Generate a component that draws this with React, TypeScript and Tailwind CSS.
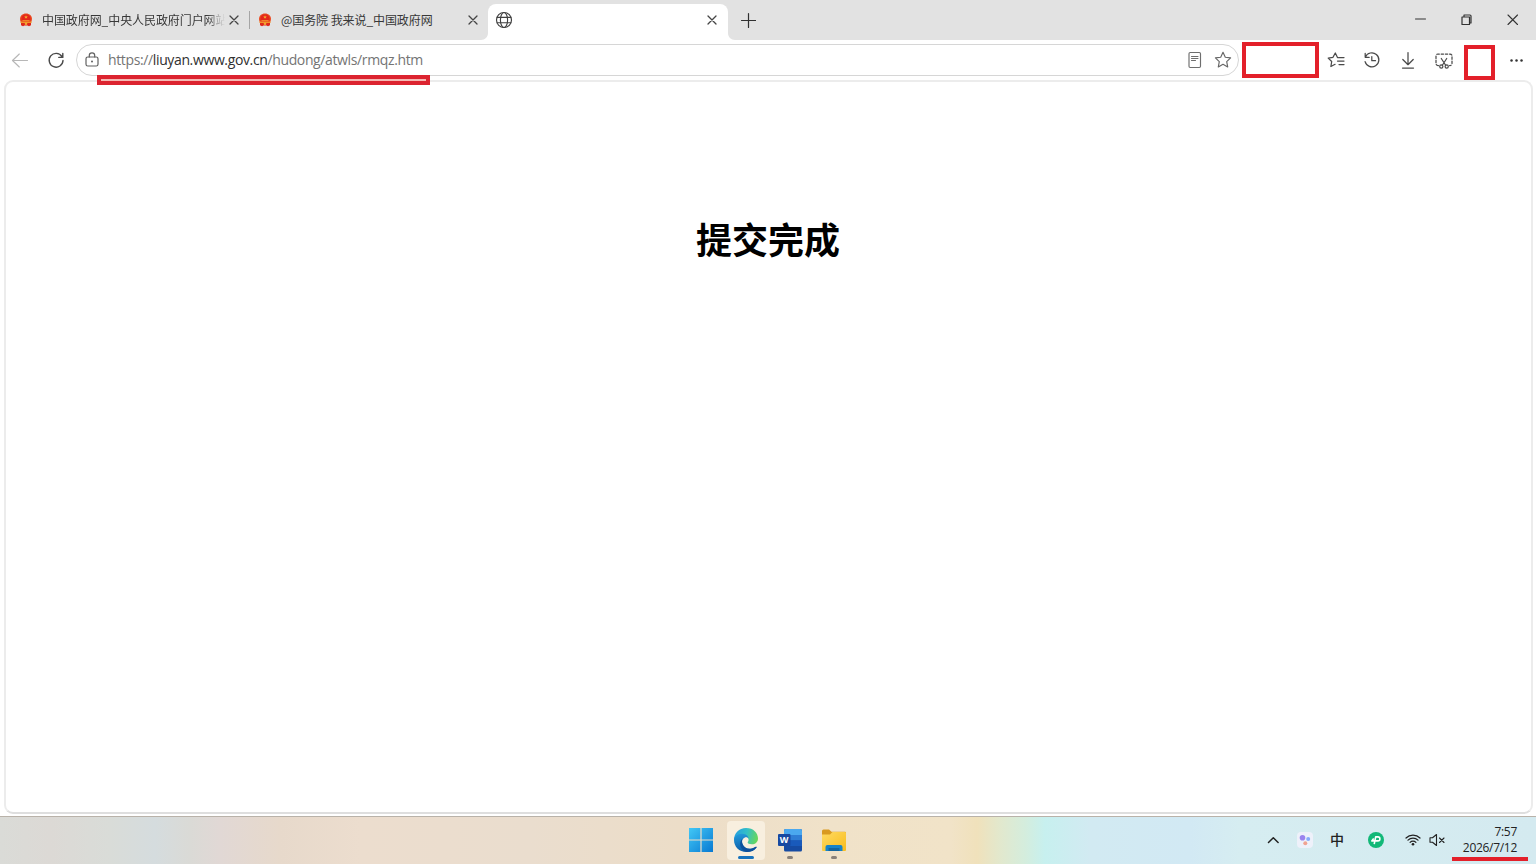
import React from "react";

const stroke = { fill: "none", stroke: "currentColor", strokeLinecap: "round", strokeLinejoin: "round" } as const;

function Emblem() {
  return (
    <svg className="size-4 shrink-0" viewBox="0 0 16 16">
      <path d="M8 1.500C4.400 1.500 2 3.800 2 7.100c0 1.300.4 2.300 1 3.100h10c.6-.8 1-1.800 1-3.100 0-3.300-2.400-5.600-6-5.600z" fill="#ea4a20" />
      <path d="M8 2.600c-2.800 0-4.600 1.800-4.600 4.300 0 .9.200 1.600.6 2.300h8c.4-.7.600-1.400.6-2.300 0-2.500-1.800-4.300-4.600-4.300z" fill="#e3261b" />
      <path d="M8 3.200l.6 1.200 1.200.1-.9.900.3 1.200L8 6l-1.200.6.3-1.200-.9-.9 1.200-.1zM4.400 8.200h7.200v1H4.400z" fill="#f3a42f" />
      <path d="M2.200 9.500c2 .3 9.600.3 11.600 0l-.4 1.600H2.600z" fill="#f0932b" />
      <path d="M3 11h10v2.300l-2 1-1.500-.9h-3l-1.500.9-2-1z" fill="#df271b" />
      <circle cx="8" cy="11.700" r="1.300" fill="#f3a42f" />
    </svg>
  );
}

function Close() {
  return (
    <svg className="size-4 shrink-0 text-[#454545]" viewBox="0 0 16 16">
      <path d="M4 4l8 8M12 4l-8 8" {...stroke} strokeWidth="1.300" />
    </svg>
  );
}

function Globe() {
  return (
    <svg className="size-[18px] text-[#404040]" viewBox="0 0 18 18">
      <g {...stroke} strokeWidth="1.150">
        <circle cx="9" cy="9" r="7.500" />
        <ellipse cx="9" cy="9" rx="3.600" ry="7.500" />
        <path d="M2.200 6.300h13.600M2.200 11.700h13.600" />
      </g>
    </svg>
  );
}

const starPath = "M10 2.300l2.300 4.900 5.300.7-3.900 3.700 1 5.300-4.700-2.600-4.700 2.600 1-5.300-3.900-3.700 5.300-.7z";

function TabStrip() {
  return (
    <header className="flex h-10 bg-[#e2e2e2] text-xs text-[#383838]">
      <div className="flex h-10 w-[249px] items-center pl-[18px] pr-[7px]">
        <Emblem />
        <div className="ml-2 w-[183px] overflow-hidden whitespace-nowrap tracking-[-0.08px] [mask-image:linear-gradient(to_right,black_90%,transparent_100%)]">中国政府网_中央人民政府门户网站</div>
        <div className="ml-[1px]"><Close /></div>
      </div>
      <div className="mt-[11px] h-[18px] w-px bg-[#a5a5a5]" />
      <div className="flex h-10 w-[238px] items-center pl-[7px] pr-[15px]">
        <Emblem />
        <div className="ml-2 flex-1 whitespace-nowrap tracking-[-0.08px]">@国务院 我来说_中国政府网</div>
        <div className="-mr-[8px]"><Close /></div>
      </div>
      <div className="flex h-10 w-[240px]">
        <svg className="-ml-[7px] mt-auto h-[7px] w-[7px] shrink-0" viewBox="0 0 7 7"><path d="M7 0v7H0C4 7 7 4 7 0z" fill="#fff" /></svg>
        <div className="mt-1 flex h-9 w-[240px] shrink-0 items-center justify-between rounded-t-[8px] bg-white pb-1 pl-[7px] pr-[8px]">
          <Globe />
          <Close />
        </div>
        <svg className="mt-auto h-[7px] w-[7px] shrink-0" viewBox="0 0 7 7"><path d="M0 0v7h7C3 7 0 4 0 0z" fill="#fff" /></svg>
      </div>
      <svg className="ml-[12px] mt-[12px] size-4 text-[#303030]" viewBox="0 0 16 16"><path d="M8.500 1.500v14M1.500 8.500h14" {...stroke} strokeWidth="1.200" /></svg>
      <div className="ml-auto flex h-10 items-center text-[#333]">
        <svg className="h-10 w-[46px]" viewBox="0 0 46 40"><path d="M18.500 19h10" {...stroke} /></svg>
        <svg className="h-10 w-[46px]" viewBox="0 0 46 40"><path d="M19 17h7.500v7.500H19zM21 17v-2h6q1 0 1 1v7h-1.500" {...stroke} strokeWidth="1.200" /></svg>
        <svg className="h-10 w-[47px]" viewBox="0 0 47 40"><path d="M19 15l9.500 9.500M28.500 15L19 24.500" {...stroke} strokeWidth="1.100" /></svg>
      </div>
    </header>
  );
}

function Toolbar() {
  return (
    <div className="flex h-10 items-center bg-white text-[#4a4a4a]">
      <svg className="ml-[10px] size-5 shrink-0 text-[#b7b7b7]" viewBox="0 0 20 20"><path d="M17.500 10.500h-15M9.300 4l-6.800 6.500L9.300 17" {...stroke} strokeWidth="1.150" /></svg>
      <svg className="ml-4 size-5 shrink-0" viewBox="0 0 20 20"><path d="M15.900 6.500A6.900 6.900 0 1 0 17 10.500M16.800 3.400v4h-4" {...stroke} strokeWidth="1.400" /></svg>
      <div className="ml-[10px] flex h-8 w-[1163px] shrink-0 items-center rounded-full border border-[#d6d6d6] bg-white pl-[5px] pr-[5px]">
        <svg className="size-5 shrink-0 text-[#606060]" viewBox="0 0 20 20">
          <rect x="4" y="7" width="12" height="9" rx="1.800" {...stroke} strokeWidth="1.200" />
          <path d="M7.300 7V5.500a2.700 2.700 0 0 1 5.400 0V7" {...stroke} strokeWidth="1.200" /><circle cx="10" cy="11.500" r="1" fill="currentColor" />
        </svg>
        <div className="ml-[6px] flex-1 whitespace-nowrap font-['Open_Sans','Noto_Sans_CJK_SC',sans-serif] text-[14px] leading-5 tracking-[-0.37px] text-[#747474]">https://<span className="text-[#303030]">liuyan.www.gov.cn</span>/hudong/atwls/rmqz.htm</div>
        <svg className="size-5 shrink-0 text-[#6e6e6e]" viewBox="0 0 20 20"><rect x="4" y="2.500" width="11.500" height="15" rx="1.200" {...stroke} strokeWidth="1.150" /><path d="M6.500 6.500h6.500M6.500 8.500h6.500M6.500 10.500h4" {...stroke} strokeWidth="1.100" /></svg>
        <svg className="ml-2 size-5 shrink-0 text-[#666]" viewBox="0 0 20 20"><path d={starPath} {...stroke} strokeWidth="1.150" /></svg>
      </div>
      <svg className="ml-[87px] size-5 shrink-0" viewBox="0 0 20 20"><path d="M12.300 7.500H11.500L9.300 3 7 7.300l-4.800.8 3.500 3.400-.8 5 4.200-2.200M13 7.500h5M11.500 11H18M13 14.500h5" {...stroke} strokeWidth="1.250" /></svg>
      <svg className="ml-4 size-5 shrink-0" viewBox="0 0 20 20"><path d="M3.400 7.100a7 7 0 1 1-.3 4.500M3.200 3.300v4h4M9.800 6.500v4.200h3.700" {...stroke} strokeWidth="1.250" /></svg>
      <svg className="ml-4 size-5 shrink-0" viewBox="0 0 20 20"><path d="M10 2.500v12M4.800 9.500l5.200 5.200 5.200-5.200M4.500 18h11" {...stroke} strokeWidth="1.250" /></svg>
      <svg className="ml-4 size-5 shrink-0" viewBox="0 0 20 20">
        <path d="M4.500 15.500H4a2 2 0 0 1-2-2V6a2 2 0 0 1 2-2h12a2 2 0 0 1 2 2v7.500a2 2 0 0 1-2 2h-.5" {...stroke} strokeWidth="1.250" strokeDasharray="2.400 1.800" />
        <path d="M7.300 8.500l4.500 7M12.700 8.500l-4.500 7" {...stroke} strokeWidth="1.200" /><circle cx="7.300" cy="16.500" r="1.600" {...stroke} strokeWidth="1.200" /><circle cx="12.700" cy="16.500" r="1.600" {...stroke} strokeWidth="1.200" />
      </svg>
      <svg className="ml-[52px] size-5 shrink-0 text-[#333]" viewBox="0 0 20 20"><g fill="currentColor"><circle cx="5.500" cy="10.500" r="1.250" /><circle cx="10.500" cy="10.500" r="1.250" /><circle cx="15.500" cy="10.500" r="1.250" /></g></svg>
    </div>
  );
}

function EdgeLogo() {
  return (
    <svg className="size-[26px]" viewBox="0 0 26 26">
      <defs>
        <linearGradient id="edgeGreen" x1="0" y1=".3" x2="1" y2=".5"><stop stopColor="#249ee0" /><stop offset=".5" stopColor="#32bfc8" /><stop offset="1" stopColor="#67d75b" /></linearGradient>
        <linearGradient id="edgeBlue" x1=".2" y1="0" x2=".4" y2="1"><stop stopColor="#229adb" /><stop offset="1" stopColor="#0b5aa6" /></linearGradient>
      </defs>
      <path d="M1 13C1 6 6 1 13 1c7.500 0 12 5 12 10.500 0 3.500-2.600 5.800-6.200 5.800-2.700 0-4.200-1-4.200-2 0-.6 1-1 1-2.600 0-2-2-3.700-5.200-3.700C6 9 3 10.500 1 13z" fill="url(#edgeGreen)" />
      <path d="M1 13c0-3 3-6.300 8-6.300 4.600 0 6.700 3 6.700 5-1-1.300-2.700-1.700-4.200-1-2.300 1-3 3.600-2 6.300 1.400 3.800 5.300 5.500 9.500 4.400 1.800-.4 3.300-1.300 4-1.600.5-.2.800.2.500.6C21.500 23.300 18 25 13.500 25 6 25 1 19.500 1 13z" fill="url(#edgeBlue)" />
      <path d="M9.400 11.700c-2.700 2.500-3 6.700-.8 9.700 1.300 1.900 3 3 5.400 3.500 4.500-.1 7.600-2 9.500-4.500.3-.5-.1-.8-.6-.6-.6.300-2.200 1.200-3.900 1.600-4.200 1.100-8.100-.6-9.500-4.400-.7-1.900-.6-3.800-.1-5.300z" fill="#0c4f9c" />
    </svg>
  );
}

function Taskbar() {
  return (
    <footer className="grid h-12 grid-cols-[685px_166px_1fr] border-t border-[#b9b2a9] bg-[linear-gradient(90deg,#dadbd7_0px,#dcd9d5_50px,#d9dcd8_110px,#d5dcde_155px,#dadad6_190px,#e1d8d5_220px,#e7d9cb_280px,#ecddce_360px,#eaddce_530px,#ecddc8_680px,#f0e2c9_830px,#f1e3c8_950px,#f0e1bb_977px,#e2e8cd_1000px,#d4eddd_1025px,#c7f0ef_1045px,#d2eaf2_1090px,#d2e9f4_1190px,#d6edf1_1240px,#d4eaf0_1536px)]">
      <div />
      <div className="flex items-start pt-1">
        <svg className="mx-1 mt-[7px] size-6" viewBox="0 0 24 24">
          <defs><linearGradient id="windowsBlue" x1="0" y1="0" x2="1" y2="1"><stop stopColor="#42c8f6" /><stop offset="1" stopColor="#0879d2" /></linearGradient></defs>
          <path d="M0 0h11.400v11.400H0zM12.600 0H24v11.400H12.600zM0 12.600h11.400V24H0zM12.600 12.600H24V24H12.600z" fill="url(#windowsBlue)" />
        </svg>
        <div className="ml-[10px] flex h-[39px] w-[38px] flex-col items-center rounded-[4px] bg-[#f8efdf] pt-[6px]">
          <EdgeLogo />
          <div className="mt-[3px] h-[3px] w-4 rounded-full bg-[#1672bd]" />
        </div>
        <div className="ml-3 flex w-[26px] flex-col items-center pt-[6px]">
          <svg className="h-[26px] w-[26px]" viewBox="0 0 26 26">
            <rect x="7" y="2" width="18" height="22.500" rx="1.500" fill="#164ba2" /><path d="M7 3.500Q7 2 8.500 2h15Q25 2 25 3.500V8H7z" fill="#4aa8ef" /><path d="M7 8h18v5.500H7z" fill="#2e7dd5" /><path d="M7 13.500h18V19H7z" fill="#195abb" />
            <rect x="1" y="7" width="12.500" height="12" rx="1" fill="#1749a1" /><text x="7.200" y="16.300" textAnchor="middle" fill="#fff" fontFamily="Open Sans" fontWeight="700" fontSize="9">W</text>
          </svg>
          <div className="mt-[3px] h-[3px] w-[6px] rounded-full bg-[#89817a]" />
        </div>
        <div className="ml-[18px] flex w-[26px] flex-col items-center pt-[6px]">
          <svg className="size-[26px]" viewBox="0 0 26 26">
            <defs><linearGradient id="folderYellow" x1="0" y1="0" x2="1" y2="1"><stop stopColor="#ffda62" /><stop offset="1" stopColor="#f8bc1c" /></linearGradient></defs>
            <path d="M1 9V4Q1 2.500 2.500 2.500H8l2.500 2.200H24q1 0 1 1V9z" fill="#d99a20" /><path d="M1 7.500h8L11.500 5H24q1 0 1 1v17q0 1-1 1H2q-1 0-1-1z" fill="url(#folderYellow)" />
            <path d="M4.500 24v-4q0-2 2-2h13q2 0 2 2v4z" fill="#1683c9" /><path d="M7.500 21h11v3h-11z" fill="#12659f" />
          </svg>
          <div className="mt-[3px] h-[3px] w-[6px] rounded-full bg-[#89817a]" />
        </div>
      </div>
      <div className="flex items-start justify-end pr-[19px] text-[#222]">
        <svg className="mt-[15px] size-4" viewBox="0 0 16 16"><path d="M3.500 10.500L8.300 5.700l4.800 4.800" {...stroke} strokeWidth="1.500" /></svg>
        <svg className="ml-4 mt-[15px] size-4" viewBox="0 0 16 16"><rect x="0" y="0" width="16" height="16" rx="4" fill="#eef1fa" /><circle cx="5.500" cy="5.700" r="2.800" fill="#9a83ee" /><circle cx="11.200" cy="7" r="2" fill="#86aafa" /><circle cx="8.300" cy="11.300" r="2" fill="#f0a392" /></svg>
        <span className="ml-[17px] mt-[12px] w-[14px] text-[14px] font-medium leading-5">中</span>
        <svg className="ml-6 mt-[15px] size-4" viewBox="0 0 16 16"><circle cx="8" cy="8" r="8" fill="#12b878" /><path d="M6.200 12.200L7.700 4.900h2.200a2 2 0 0 1 0 4H3.800l1.900-2.400" fill="none" stroke="#fff" strokeWidth="1.600" strokeLinejoin="round" /></svg>
        <svg className="ml-[21px] mt-[15px] size-4" viewBox="0 0 16 16"><path d="M1 6a10 10 0 0 1 14 0M3 8.200a7 7 0 0 1 10 0M5.100 10.300a4.100 4.100 0 0 1 5.800 0" {...stroke} strokeWidth="1.200" /><circle cx="8" cy="12.200" r="1.300" fill="currentColor" /></svg>
        <svg className="ml-2 mt-[15px] size-4" viewBox="0 0 16 16"><path d="M1 5.700h2.500L7.500 2.500v11l-4-3.200H1zM10.500 6l4.500 4.500M15 6l-4.500 4.500" {...stroke} strokeWidth="1.100" /></svg>
        <div className="ml-[15px] mt-[7px] flex w-[57px] flex-col items-end whitespace-nowrap font-['Open_Sans',sans-serif] text-[12px] leading-4 tracking-[-0.3px]"><div>7:57</div><div>2026/7/12</div></div>
      </div>
    </footer>
  );
}

export default function App() {
  return (
    <div className="relative flex h-[864px] w-[1536px] flex-col overflow-hidden bg-white font-['Noto_Sans_CJK_SC',sans-serif]">
      <TabStrip />
      <Toolbar />
      <main className="mb-[2px] ml-1 mr-[3px] flex flex-1 items-start justify-center rounded-[9px] border-2 border-b-[#dedede] border-l-[#ececec] border-r-[#ececec] border-t-[#ececec] bg-white pt-[129px]">
        <h1 className="-ml-px text-[36px] font-bold leading-[54px] text-black">提交完成</h1>
      </main>
      <Taskbar />
      <div className="absolute left-[97px] top-[75px] h-[10px] w-[333px] border-x-4 border-y-4 border-[#dc2430] bg-[#f5b9b4]" />
      <div className="absolute left-[1242px] top-[42px] h-9 w-[77px] border-4 border-[#e3202a]" />
      <div className="absolute left-[1464px] top-[45px] h-[35px] w-[31px] border-4 border-[#e3202a]" />
      <div className="absolute left-[1452px] top-[857px] h-[4px] w-[76px] bg-[#e3202a]" />
    </div>
  );
}
